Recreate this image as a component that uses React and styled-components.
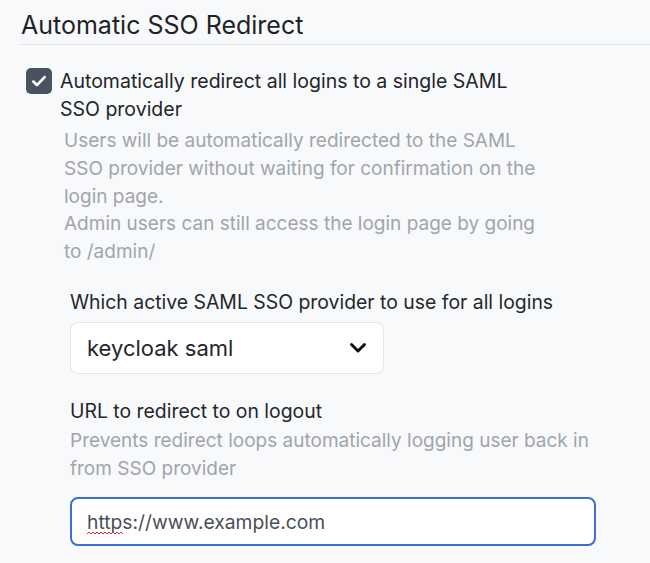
import React from "react";
import styled, { createGlobalStyle } from "styled-components";

const Global = createGlobalStyle`
  html, body { margin: 0; padding: 0; background: #f8f9fb; }
  body { font-family: Inter, "Noto Sans", sans-serif; color: #212529; }
  * { box-sizing: border-box; }
`;

const Page = styled.div`
  padding: 10px 0 0 18px;
  width: 650px;
  height: 563px;
  overflow: hidden;
`;

const Heading = styled.h2`
  margin: 0;
  padding: 0 0 4px 3px;
  font-size: 25px;
  font-weight: 400;
  line-height: 30px;
  color: #1f2328;
  border-bottom: 1px solid #e3e6ea;
`;

const CheckRow = styled.label`
  display: flex;
  align-items: flex-start;
  gap: 8px;
  margin: 22px 0 0 8px;
`;

const Box = styled.span`
  flex: none;
  width: 26px;
  height: 26px;
  border-radius: 5px;
  background: #4a5262;
  display: flex;
  align-items: center;
  justify-content: center;
  margin-top: 1px;
`;

const LabelText = styled.span`
  font-size: 19.5px;
  line-height: 28px;
  color: #222529;
  max-width: 470px;
`;

const Help = styled.p`
  margin: ${(p) => p.$m || "0"};
  font-size: 19px;
  line-height: 27.75px;
  color: #a1a5ab;
  max-width: ${(p) => p.$w || "480px"};
`;

const Field = styled.div`
  display: flex;
  flex-direction: column;
  margin: ${(p) => p.$m};
  padding-left: 52px;
`;

const FieldLabel = styled.div`
  font-size: 19.4px;
  line-height: 24px;
  color: #24272b;
`;

const SelectBox = styled.div`
  margin-top: 8px;
  width: 314px;
  height: 52px;
  background: #fff;
  border: 1px solid #e3e5e8;
  border-radius: 8px;
  display: flex;
  align-items: center;
  justify-content: space-between;
  padding: 0 16px 0 16px;
  font-size: 22px;
  color: #24272b;
`;

const InputWrap = styled.div`
  position: relative;
  margin-top: 15px;
  width: 526px;
`;

const Input = styled.input`
  width: 100%;
  height: 49px;
  border: 2px solid #3a6fd8;
  border-radius: 8px;
  background: #fff;
  padding: 0 15px;
  font-family: Inter, "Noto Sans", sans-serif;
  font-size: 19.3px;
  color: #4a4f57;
  outline: none;
`;

const Squiggle = styled.svg`
  position: absolute;
  left: 17px;
  top: 34px;
`;

export default function App() {
  return (
    <>
      <Global />
      <Page>
        <Heading>Automatic SSO Redirect</Heading>
        <CheckRow>
          <Box>
            <svg width="18" height="18" viewBox="0 0 16 16">
              <path d="M3 8.5l3.2 3.2L13 4.5" fill="none" stroke="#fff" strokeWidth="2.4" strokeLinecap="round" strokeLinejoin="round" />
            </svg>
          </Box>
          <LabelText>Automatically redirect all logins to a single SAML SSO provider</LabelText>
        </CheckRow>
        <Help $m="4px 0 0 46px" $w="480px">
          Users will be automatically redirected to the SAML SSO provider without waiting for confirmation on the login page.
          <br />
          Admin users can still access the login page by going to /admin/
        </Help>
        <Field $m="24px 0 0 0">
          <FieldLabel>Which active SAML SSO provider to use for all logins</FieldLabel>
          <SelectBox>
            <span>keycloak saml</span>
            <svg width="18" height="12" viewBox="0 0 18 12">
              <path d="M2.5 2.5l6.5 6.5 6.5-6.5" fill="none" stroke="#111" strokeWidth="3" strokeLinecap="round" strokeLinejoin="round" />
            </svg>
          </SelectBox>
        </Field>
        <Field $m="25px 0 0 0">
          <FieldLabel>URL to redirect to on logout</FieldLabel>
          <Help $m="4px 0 0 0" $w="520px">Prevents redirect loops automatically logging user back in from SSO provider</Help>
          <InputWrap>
            <Input defaultValue="https://www.example.com" spellCheck={false} />
            <Squiggle width="40" height="4" viewBox="0 0 40 4">
              <path d="M0 3 L2 1 L4 3 L6 1 L8 3 L10 1 L12 3 L14 1 L16 3 L18 1 L20 3 L22 1 L24 3 L26 1 L28 3 L30 1 L32 3 L34 1 L36 3" fill="none" stroke="#e03030" strokeWidth="1" />
            </Squiggle>
          </InputWrap>
        </Field>
      </Page>
    </>
  );
}
